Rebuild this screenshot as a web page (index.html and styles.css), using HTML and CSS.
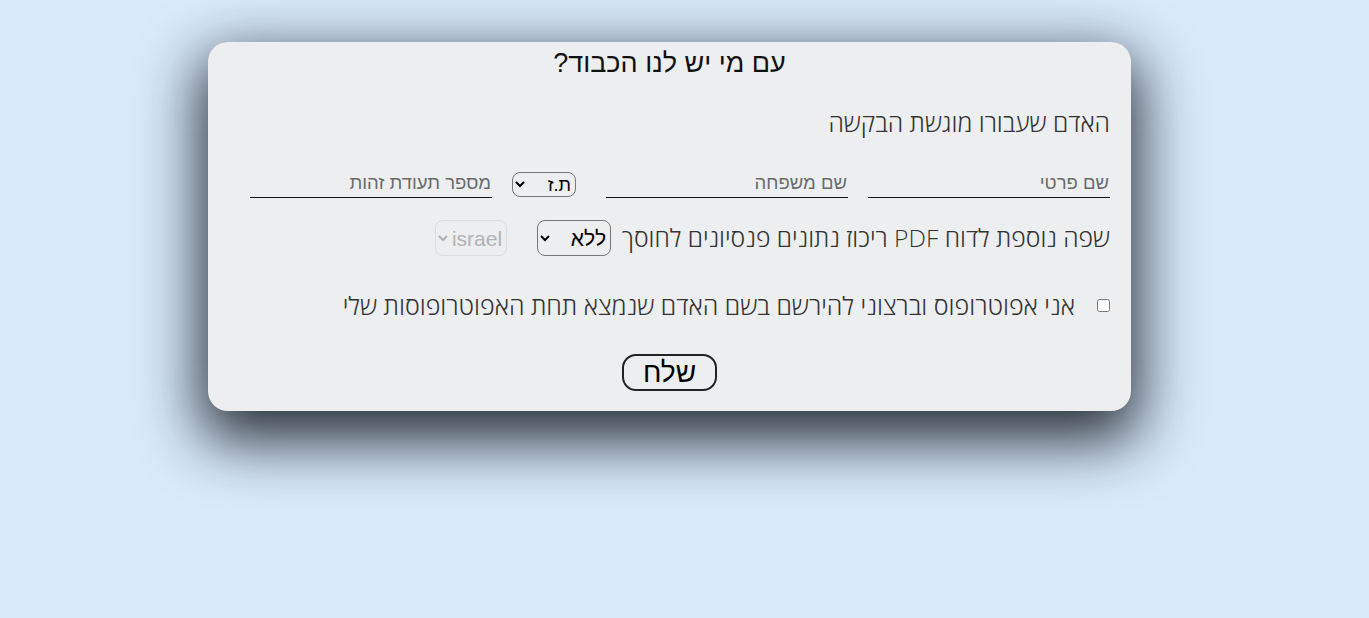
FILE: index.html
```html
<!DOCTYPE html>
<html lang="he" dir="rtl">
<head>
<meta charset="utf-8">
<title>עם מי יש לנו הכבוד?</title>
<link rel="stylesheet" href="styles.css">
</head>
<body>
<div class="card">
  <h1 class="title">עם מי יש לנו הכבוד?</h1>
  <div class="subtitle">האדם שעבורו מוגשת הבקשה</div>
  <div class="fields">
    <input class="line-input" type="text" placeholder="שם פרטי">
    <input class="line-input" type="text" placeholder="שם משפחה">
    <select class="id-select"><option>ת.ז</option></select>
    <input class="line-input" type="text" placeholder="מספר תעודת זהות">
  </div>
  <div class="lang-row">
    <span class="lang-label">שפה נוספת לדוח PDF ריכוז נתונים פנסיונים לחוסך</span>
    <select class="lang-select"><option>ללא</option></select>
    <select class="country-select" disabled><option>israel</option></select>
  </div>
  <label class="check-row">
    <input type="checkbox" class="check">
    <span class="check-label">אני אפוטרופוס וברצוני להירשם בשם האדם שנמצא תחת האפוטרופוסות שלי</span>
  </label>
  <div class="actions">
    <button class="send" type="button">שלח</button>
  </div>
</div>
</body>
</html>
```

FILE: styles.css
```css
html, body {
  margin: 0;
  padding: 0;
}
body {
  background: #d9eafb;
  height: 618px;
  overflow: hidden;
  font-family: "Open Sans", "Liberation Sans", sans-serif;
}
.card {
  box-sizing: border-box;
  width: 923px;
  height: 369px;
  margin: 42px 238px 0 auto;
  background: #edeef0;
  border-radius: 20px;
  box-shadow: 0 22px 60px 8px rgba(12, 16, 24, 0.85);
  padding: 0 21px 0 21px;
  display: flex;
  flex-direction: column;
}
.title {
  margin: 3px 0 0 0;
  font-family: "Liberation Sans", Arial, sans-serif;
  font-weight: normal;
  font-size: 27px;
  line-height: 36px;
  color: #111;
  text-align: center;
}
.subtitle {
  margin-top: 25px;
  font-size: 24.8px;
  font-weight: 300;
  line-height: 32px;
  color: #333;
}
.fields {
  margin-top: 33px;
  display: flex;
  align-items: flex-end;
  gap: 20px;
}
.line-input {
  box-sizing: border-box;
  width: 242px;
  height: 27px;
  border: none;
  border-bottom: 1px solid #111;
  background: transparent;
  font-family: "Liberation Sans", Arial, sans-serif;
  font-size: 18.5px;
  padding: 0 1px 2px 0;
  color: #222;
  outline: none;
}
.line-input::placeholder {
  color: #6a6a6a;
}
.id-select {
  box-sizing: border-box;
  width: 64px;
  height: 25px;
  margin: 0 10px 1px 0;
  border: 1px solid #767676;
  border-radius: 8px;
  background: transparent;
  font-family: "Liberation Sans", Arial, sans-serif;
  font-size: 18px;
  color: #000;
}
.lang-row {
  margin-top: 22px;
  display: flex;
  align-items: center;
}
.lang-label {
  font-size: 24.7px;
  font-weight: 300;
  color: #333;
  line-height: 32px;
}
.lang-select {
  box-sizing: border-box;
  width: 74px;
  height: 36px;
  margin-right: 11px;
  border: 1px solid #767676;
  border-radius: 8px;
  background: transparent;
  font-family: "Liberation Sans", Arial, sans-serif;
  font-size: 21px;
  color: #000;
}
.country-select {
  box-sizing: border-box;
  width: 72px;
  height: 36px;
  margin-right: 30px;
  border: 1px solid #d6d6d6;
  border-radius: 8px;
  background: transparent;
  font-family: "Liberation Sans", Arial, sans-serif;
  font-size: 21px;
  color: #9a9a9a;
}
.check-row {
  margin-top: 33px;
  display: flex;
  align-items: center;
}
.check {
  margin: 0 0 0 22px;
  width: 13px;
  height: 13px;
}
.check-label {
  font-size: 25px;
  font-weight: 300;
  color: #333;
  line-height: 32px;
}
.actions {
  margin-top: 33px;
  display: flex;
  justify-content: center;
}
.send {
  box-sizing: border-box;
  width: 95px;
  height: 37px;
  border: 2px solid #222;
  border-radius: 14px;
  background: transparent;
  font-family: "Liberation Sans", Arial, sans-serif;
  font-size: 28px;
  color: #000;
  padding: 0;
  line-height: 30px;
}
```
